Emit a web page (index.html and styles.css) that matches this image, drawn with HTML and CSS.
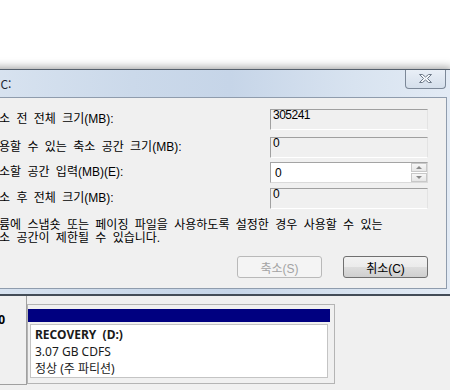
FILE: index.html
```html
<!DOCTYPE html>
<html lang="ko">
  <head>
    <meta charset="UTF-8" />
    <title>축소 C:</title>
    <link rel="stylesheet" href="styles.css">
  </head>
  <body>
    <div class="desktop"></div>

    <div class="window">
      <div class="titlebar">
        <span class="title">축소 C:</span>
        <button class="close-btn" aria-label="닫기">
          <svg width="15" height="11" viewBox="0 0 15 11">
            <path d="M1.5 1.5 H4.5 L7.5 4 L10.5 1.5 H13.5 L9.5 5.5 L13.5 9.5 H10.5 L7.5 7 L4.5 9.5 H1.5 L5.5 5.5 Z" fill="#f4f7fb" stroke="#6e7a89" stroke-width="1" stroke-linejoin="round"/>
          </svg>
        </button>
      </div>

      <div class="client">
        <div class="field-row row-1">
          <span class="label">축소 전 전체 크기(MB):</span>
          <div class="box readonly">305241</div>
        </div>
        <div class="field-row row-2">
          <span class="label">사용할 수 있는 축소 공간 크기(MB):</span>
          <div class="box readonly">0</div>
        </div>
        <div class="field-row row-3">
          <span class="label">축소할 공간 입력(MB)(E):</span>
          <div class="box editable">
            <span class="box-value">0</span>
            <div class="spin">
              <span class="spin-btn up"></span>
              <span class="spin-btn down"></span>
            </div>
          </div>
        </div>
        <div class="field-row row-4">
          <span class="label">축소 후 전체 크기(MB):</span>
          <div class="box readonly">0</div>
        </div>

        <p class="note">볼륨에 스냅숏 또는 페이징 파일을 사용하도록 설정한 경우 사용할 수 있는<br>축소 공간이 제한될 수 있습니다.</p>

        <div class="button-group">
          <button class="button" disabled>축소(S)</button>
          <button class="button">취소(C)</button>
        </div>
      </div>
    </div>

    <div class="disk-panel">
      <div class="disk-label">디스크 0</div>
      <div class="partition">
        <div class="partition-bar"></div>
        <div class="partition-body">
          <div class="volume-name">RECOVERY&nbsp; (D:)</div>
          <div>3.07 GB CDFS</div>
          <div>정상 (주 파티션)</div>
        </div>
      </div>
    </div>
  </body>
</html>
```

FILE: styles.css
```css
html, body {
  margin: 0;
  padding: 0;
  width: 450px;
  height: 390px;
  overflow: hidden;
}
body {
  background-color: #fff;
  font-family: 'Liberation Sans', 'Noto Sans CJK KR', sans-serif;
  font-size: 12px;
  color: #000;
}
.desktop {
  height: 69px;
  background-color: #fff;
}
.window {
  box-sizing: border-box;
  width: 492px;
  margin-left: -40px;
  padding: 0 5px 5px 8px;
  border-top: 1px solid #56606d;
  border-bottom: 2px solid #434c57;
  background: linear-gradient(to right, #dbe5f1 0%, #cbd9ea 35%, #c6d5e8 55%, #d8e3f0 80%, #e3ebf5 100%);
  box-shadow: 0 -2px 8px rgba(0, 0, 0, 0.35);
}
.titlebar {
  height: 27px;
  display: flex;
  justify-content: space-between;
  align-items: center;
}
.title {
  padding-left: 6px;
  font-family: 'Noto Sans CJK KR', sans-serif;
  font-size: 12px;
  color: #1e2630;
  word-spacing: 1px;
}
.close-btn {
  align-self: flex-start;
  box-sizing: border-box;
  width: 41px;
  height: 19px;
  margin-right: 1px;
  padding: 0;
  border: 1px solid #7c8898;
  border-top: none;
  border-radius: 0 0 4px 4px;
  background: linear-gradient(#e9eff7, #d5dfeb);
  display: flex;
  align-items: center;
  justify-content: center;
}
.close-btn svg {
  display: block;
  margin-top: -1px;
}
.client {
  height: 190px;
  padding: 0 18px 0 19px;
  border: 1px solid #8f9cad;
  background-color: #f0f0f0;
}
.field-row {
  height: 21px;
  display: flex;
  justify-content: space-between;
  align-items: center;
}
.row-1 { margin-top: 11px; }
.row-2 { margin-top: 7px; }
.row-3 { margin-top: 4px; }
.row-4 { margin-top: 5px; }
.label {
  font-family: 'Liberation Sans', 'Noto Sans CJK KR', sans-serif;
  padding-bottom: 4px;
  word-spacing: 3px;
  white-space: nowrap;
}
.box {
  box-sizing: border-box;
  width: 158px;
  height: 21px;
  border: 1px solid #a0a0a0;
  border-right-color: #e3e3e3;
  border-bottom-color: #fff;
  font-family: 'Liberation Sans', sans-serif;
  font-size: 12px;
  letter-spacing: -0.5px;
}
.box.readonly {
  padding: 0 2px;
  line-height: 11px;
  background-color: #f0f0f0;
}
.box.editable {
  display: flex;
  align-items: center;
  justify-content: space-between;
  padding: 0 0 0 4px;
  border-color: #a4a4a4 #dadada #dadada #a4a4a4;
  background-color: #fff;
}
.spin {
  display: flex;
  flex-direction: column;
  gap: 1px;
}
.spin-btn {
  box-sizing: border-box;
  width: 16px;
  height: 9px;
  border: 1px solid #c8c8c8;
  background: linear-gradient(#f7f7f7, #e6e6e6);
  display: flex;
  align-items: center;
  justify-content: center;
}
.spin-btn::after {
  content: "";
  border-left: 3px solid transparent;
  border-right: 3px solid transparent;
}
.spin-btn.up::after {
  border-bottom: 3px solid #8a8a8a;
}
.spin-btn.down::after {
  border-top: 3px solid #8a8a8a;
}
.note {
  margin: 10px 0 0 0;
  line-height: 13px;
  word-spacing: 3px;
  white-space: nowrap;
}
.button-group {
  margin-top: 11px;
  display: flex;
  justify-content: flex-end;
  gap: 21px;
}
.button {
  box-sizing: border-box;
  width: 85px;
  height: 22px;
  padding: 0;
  border: 1px solid #707070;
  border-radius: 3px;
  background: linear-gradient(#f2f2f2 0%, #ebebeb 50%, #dddddd 51%, #cfcfcf 100%);
  font-family: 'Liberation Sans', 'Noto Sans CJK KR', sans-serif;
  font-size: 12px;
  color: #000;
}
.button:disabled {
  border-color: #b9b9b9;
  background: #f4f4f4;
  color: #a3a3a3;
}
.disk-panel {
  height: 94px;
  margin-left: -60px;
  display: flex;
  align-items: flex-start;
  background-color: #f0f0f0;
}
.disk-label {
  box-sizing: border-box;
  width: 87px;
  height: 89px;
  padding: 16px 0 0 22px;
  border-right: 1px solid #a0a0a0;
  border-bottom: 1px solid #a0a0a0;
  font-family: 'Noto Sans', 'Noto Sans CJK KR', sans-serif;
  font-weight: bold;
  line-height: 16px;
}
.partition {
  box-sizing: border-box;
  width: 308px;
  height: 80px;
  margin-top: 8px;
  padding: 4px 4px 0 0;
  border: 1px solid #b4b4b4;
  background-color: #f0f0f0;
}
.partition-bar {
  height: 13px;
  background-color: #000080;
}
.partition-body {
  box-sizing: border-box;
  height: 54px;
  margin: 2px 2px 0 2px;
  padding: 1px 4px;
  border: 1px solid #c4c4c4;
  background-color: #fff;
  font-family: 'Noto Sans', 'Noto Sans CJK KR', sans-serif;
  font-size: 12px;
  line-height: 17px;
  color: #1a1a1a;
}
.volume-name {
  font-weight: bold;
}
```
